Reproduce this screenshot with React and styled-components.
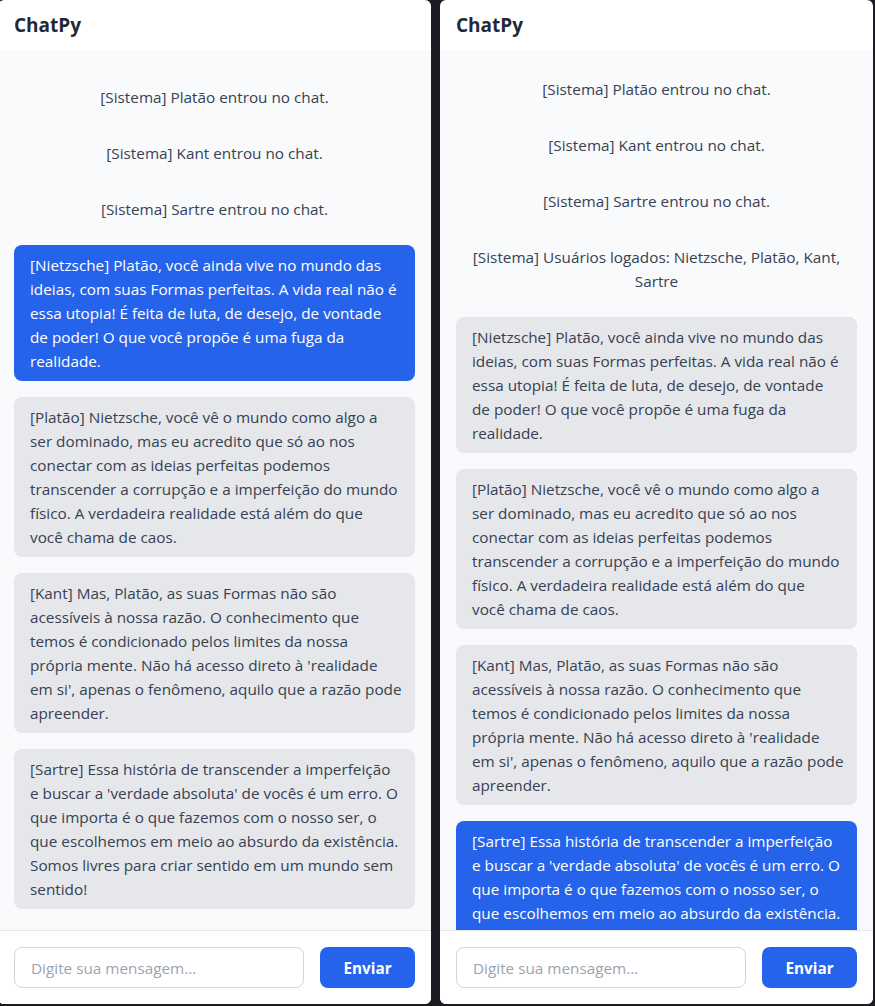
import { createGlobalStyle } from 'styled-components';
import styled from 'styled-components';

const GlobalStyle = createGlobalStyle`
  html, body {
    margin: 0;
    padding: 0;
    background: #1c1b22;
    overflow: hidden;
  }
  * {
    box-sizing: border-box;
  }
`;

// bubbles keep the line breaks of the original window
const NIETZSCHE = [
  '[Nietzsche] Platão, você ainda vive no mundo das',
  'ideias, com suas Formas perfeitas. A vida real não é',
  'essa utopia! É feita de luta, de desejo, de vontade',
  'de poder! O que você propõe é uma fuga da',
  'realidade.',
];
const PLATAO = [
  '[Platão] Nietzsche, você vê o mundo como algo a',
  'ser dominado, mas eu acredito que só ao nos',
  'conectar com as ideias perfeitas podemos',
  'transcender a corrupção e a imperfeição do mundo',
  'físico. A verdadeira realidade está além do que',
  'você chama de caos.',
];
const KANT = [
  '[Kant] Mas, Platão, as suas Formas não são',
  'acessíveis à nossa razão. O conhecimento que',
  'temos é condicionado pelos limites da nossa',
  "própria mente. Não há acesso direto à 'realidade",
  "em si', apenas o fenômeno, aquilo que a razão pode",
  'apreender.',
];
const SARTRE = [
  '[Sartre] Essa história de transcender a imperfeição',
  "e buscar a 'verdade absoluta' de vocês é um erro. O",
  'que importa é o que fazemos com o nosso ser, o',
  'que escolhemos em meio ao absurdo da existência.',
  'Somos livres para criar sentido em um mundo sem',
  'sentido!',
];

const joined = [
  { kind: 'system', text: '[Sistema] Platão entrou no chat.' },
  { kind: 'system', text: '[Sistema] Kant entrou no chat.' },
  { kind: 'system', text: '[Sistema] Sartre entrou no chat.' },
];

const chats = [
  {
    id: 'nietzsche',
    top: 27,
    messages: [
      ...joined,
      { kind: 'mine', lines: NIETZSCHE },
      { kind: 'other', lines: PLATAO },
      { kind: 'other', lines: KANT },
      { kind: 'other', lines: SARTRE },
    ],
  },
  {
    id: 'sartre',
    top: 19,
    messages: [
      ...joined,
      {
        kind: 'system',
        text: '[Sistema] Usuários logados: Nietzsche, Platão, Kant, Sartre',
      },
      { kind: 'other', lines: NIETZSCHE },
      { kind: 'other', lines: PLATAO },
      { kind: 'other', lines: KANT },
      { kind: 'mine', lines: SARTRE },
    ],
  },
];

function ChatWindow({ top, messages }) {
  return (
    <Panel>
      <Header>ChatPy</Header>
      <MessageList $top={top}>
        {messages.map((m, i) =>
          m.kind === 'system' ? (
            <SystemLine key={i}>{m.text}</SystemLine>
          ) : (
            <Bubble key={i} $mine={m.kind === 'mine'}>
              {m.lines.map((line, j) => (
                <Line key={j}>{line}</Line>
              ))}
            </Bubble>
          )
        )}
      </MessageList>
      <Composer>
        <MessageInput placeholder="Digite sua mensagem..." />
        <SendButton>Enviar</SendButton>
      </Composer>
    </Panel>
  );
}

export default function App() {
  return (
    <>
      <GlobalStyle />
      <Page>
        {chats.map((c) => (
          <ChatWindow key={c.id} top={c.top} messages={c.messages} />
        ))}
      </Page>
    </>
  );
}

const fontStack = `'Open Sans', 'Noto Sans', 'DejaVu Sans', sans-serif`;

const Page = styled.div`
  display: flex;
  gap: 9px;
  margin-left: -2px;
  height: 1006px;
  background: #1c1b22;
  font-family: ${fontStack};
`;

const Panel = styled.div`
  display: flex;
  flex-direction: column;
  flex-shrink: 0;
  width: 433px;
  height: 1004px;
  background: #fff;
  border-radius: 6px;
  overflow: hidden;
`;

const Header = styled.div`
  display: flex;
  align-items: center;
  height: 50px;
  flex-shrink: 0;
  padding: 0 16px;
  font-size: 19px;
  font-weight: 700;
  color: #1f2937;
`;

const MessageList = styled.div`
  flex: 1;
  display: flex;
  flex-direction: column;
  gap: 16px;
  overflow-y: auto;
  scrollbar-width: none;
  padding: ${({ $top }) => $top}px 16px 16px;
  background: #f9fafb;
  border-bottom: 1px solid #e5e7eb;

  &::-webkit-scrollbar {
    display: none;
  }
`;

const SystemLine = styled.div`
  flex-shrink: 0;
  padding: 8px 0;
  text-align: center;
  font-size: 15.3px;
  line-height: 24px;
  color: #374151;
`;

const Bubble = styled.div`
  flex-shrink: 0;
  padding: 8px 16px;
  border-radius: 8px;
  font-size: 15.3px;
  line-height: 24px;
  background: ${({ $mine }) => ($mine ? '#2563eb' : '#e5e7eb')};
  color: ${({ $mine }) => ($mine ? '#ffffff' : '#374151')};
`;

const Line = styled.span`
  display: block;
  white-space: nowrap;
`;

const Composer = styled.div`
  display: flex;
  gap: 16px;
  flex-shrink: 0;
  padding: 16px;
  background: #fff;
`;

const MessageInput = styled.input`
  flex: 1;
  min-width: 0;
  height: 41px;
  padding: 0 16px;
  border: 1px solid #d1d5db;
  border-radius: 8px;
  font-family: ${fontStack};
  font-size: 15.3px;
  color: #374151;
  background: #fff;
  outline: none;

  &::placeholder {
    color: #9ca3af;
  }
`;

const SendButton = styled.button`
  width: 95px;
  height: 41px;
  border: none;
  border-radius: 8px;
  background: #2563eb;
  color: #fff;
  font-family: ${fontStack};
  font-size: 15.3px;
  font-weight: 700;
  cursor: pointer;
`;
